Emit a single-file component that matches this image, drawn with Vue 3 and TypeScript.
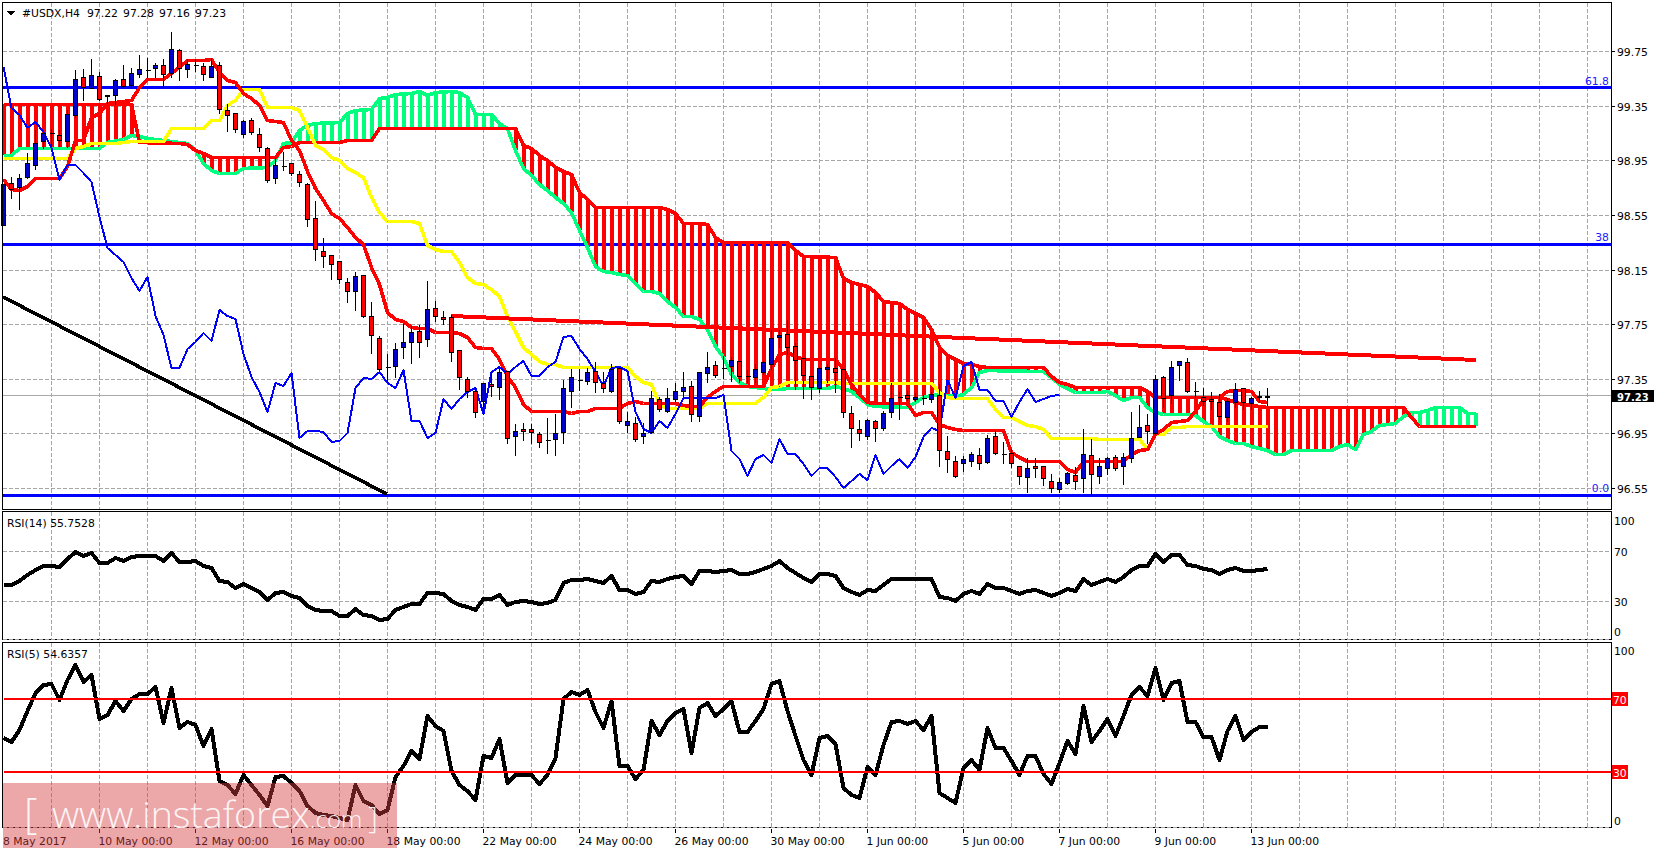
<script setup lang="ts">
type Knot = [number, number]
const barX = (k: number): number => 3.5 + 8 * k
const pts = (ys: number[]): string => ys.map((y, k) => `${barX(k)},${y}`).join(' ')
const knotPts = (ks: Knot[]): string => ks.map(([k, y]) => `${barX(k)},${y}`).join(' ')
const at = (ks: Knot[], k: number): number => {
  for (let i = 1; i < ks.length; i++) {
    if (k <= ks[i][0]) {
      const [k0, y0] = ks[i - 1]
      const [k1, y1] = ks[i]
      return y0 + ((y1 - y0) * (k - k0)) / (k1 - k0)
    }
  }
  return ks[ks.length - 1][1]
}

const spanRed: Knot[] = [[0,104],[16,104],[17,142],[22,143],[23,144],[24,150],[25,153],[26,157],[34,157],[35,147],[36,146],[37,142],[42,142],[43,140],[46,140],[47,128],[64,128],[65,145],[66,148],[67,155],[68,160],[69,167],[70,171],[71,174],[72,192],[73,199],[74,207],[82,207],[83,209],[84,213],[85,223],[87,223],[88,224],[89,237],[90,242],[98,242],[99,250],[100,256],[104,257],[105,278],[106,282],[107,284],[108,286],[109,292],[110,301],[112,303],[113,309],[114,313],[115,317],[116,329],[117,347],[118,355],[119,359],[120,363],[121,364],[122,366],[123,367],[130,367],[131,376],[132,382],[133,384],[134,387],[142,387],[143,391],[144,397],[152,397],[153,399],[154,402],[155,404],[156,405],[157,406],[158,407],[175,407],[176,417],[177,426],[184,426]]
const spanGreen: Knot[] = [[0,155],[1,155],[2,148],[12,148],[13,142],[15,139],[16,135],[17,136],[18,138],[20,140],[23,143],[24,150],[25,163],[26,170],[27,173],[29,173],[30,168],[33,167],[34,160],[35,143],[36,142],[37,130],[38,125],[39,123],[42,122],[43,113],[44,110],[46,109],[47,98],[48,97],[49,94],[51,93],[52,91],[53,95],[54,92],[56,91],[57,92],[58,97],[59,114],[61,114],[62,123],[63,128],[64,150],[65,168],[66,175],[67,184],[68,190],[69,197],[70,203],[71,212],[72,230],[73,247],[74,266],[75,271],[76,272],[77,274],[78,275],[79,283],[80,291],[81,291],[82,293],[83,301],[84,307],[85,316],[86,316],[87,319],[88,329],[89,346],[90,357],[91,374],[92,382],[93,386],[94,387],[96,389],[97,389],[98,388],[103,388],[104,386],[105,388],[106,391],[107,397],[108,404],[109,406],[113,407],[114,402],[115,397],[116,395],[117,394],[118,395],[119,396],[120,394],[121,387],[122,372],[123,370],[129,371],[130,371],[131,377],[132,384],[133,388],[134,392],[137,392],[138,391],[139,395],[140,400],[141,397],[142,397],[143,407],[144,412],[145,414],[148,414],[149,415],[150,421],[151,426],[152,436],[153,440],[154,443],[155,443],[156,446],[157,448],[158,450],[159,454],[160,454],[161,450],[166,450],[167,446],[168,444],[169,449],[170,434],[171,431],[172,425],[173,424],[174,423],[175,416],[176,412],[177,412],[178,410],[179,407],[182,407],[183,413],[184,413]]

const hatches = Array.from({ length: 185 }, (_, k) => {
  const r = at(spanRed, k)
  const g = at(spanGreen, k)
  return { k, x: barX(k), y1: Math.round(Math.min(r, g)), y2: Math.round(Math.max(r, g)), up: g < r }
})

const tenkan = [179,189,190,186,178,178,178,178,166,140,140,117,113,103,102,101,100,87,79,79,79,73,67,60,60,60,59,72,80,82,93,98,105,120,121,122,140,150,171,188,200,213,218,227,237,244,267,284,312,319,321,327,328,328,332,332,332,333,337,347,348,348,359,376,387,404,411,411,411,411,411,413,411,411,408,408,408,408,403,401,403,403,403,403,403,405,406,406,397,391,386,386,386,386,386,386,368,354,352,356,359,359,359,359,359,369,384,394,402,403,403,403,403,403,415,412,412,424,427,429,430,430,430,430,430,430,452,457,461,461,461,461,461,469,472,461,461,461,461,461,461,454,450,449,434,429,422,421,420,411,399,397,397,391,390,390,391,401,402]
const kijun = [158,158,158,158,158,158,158,158,158,148,146,143,143,143,143,142,141,141,141,141,141,128,128,128,128,128,120,120,105,100,89,89,89,107,107,107,107,110,127,145,149,157,160,168,172,177,197,212,221,221,221,221,223,245,249,251,251,262,277,283,284,289,296,316,331,347,354,361,364,364,367,367,367,367,367,367,367,367,367,376,382,384,404,408,408,408,408,408,403,403,403,403,403,403,403,397,387,386,382,382,382,382,382,382,382,383,383,383,383,383,383,383,383,383,383,383,383,392,397,398,398,398,398,398,409,417,417,421,425,426,429,438,438,438,438,438,438,439,439,439,439,439,439,449,434,434,427,427,426,426,426,426,426,426,426,426,426,426,426]
const chikou = [67,108,115,128,122,132,148,180,165,165,173,182,217,248,255,262,278,291,277,316,335,368,368,349,342,333,341,310,316,319,354,377,392,412,383,386,373,438,431,431,432,442,441,433,388,378,379,372,383,388,370,421,421,438,433,399,409,399,392,388,414,372,367,374,367,361,376,376,367,362,337,336,349,359,372,386,368,367,371,412,429,433,421,428,414,398,398,398,398,398,395,451,459,476,459,455,463,439,454,454,464,476,468,468,477,488,481,474,480,455,474,466,459,468,457,437,428,431,380,398,366,362,390,390,401,401,417,402,389,402,399,396,395]
const rsi14 = [585,585,581,575,570,566,566,567,559,552,556,553,563,563,558,561,557,556,556,556,561,553,562,562,561,566,568,581,582,588,584,588,592,600,593,592,596,598,606,610,611,611,616,616,609,615,616,620,619,610,607,604,604,593,593,594,601,605,607,610,599,599,595,605,602,601,602,604,603,600,583,580,580,579,581,583,576,590,590,594,592,581,582,579,577,576,584,571,571,572,571,570,574,574,572,569,566,561,568,573,578,582,574,574,576,588,592,595,590,591,585,579,579,579,579,579,579,597,598,601,594,591,594,584,588,588,591,594,591,590,593,596,593,589,591,579,585,582,579,582,577,570,566,566,554,562,555,555,565,566,569,570,574,570,568,571,571,570,569]
const rsi5 = [738,742,730,711,693,685,684,700,680,665,682,675,719,715,701,711,699,694,694,687,723,688,728,722,725,746,729,781,785,794,775,785,795,806,777,776,783,791,806,813,815,816,818,820,785,801,805,814,810,777,766,751,759,716,726,731,771,785,791,800,756,758,739,783,775,775,775,784,775,758,699,692,695,690,712,728,701,766,766,779,770,721,735,721,713,709,753,708,703,716,709,701,732,732,721,709,684,681,711,736,760,775,738,736,744,788,795,798,767,775,745,722,721,724,721,730,716,793,798,803,768,760,770,728,748,748,761,775,756,756,774,784,763,741,754,706,742,731,719,736,716,695,687,696,668,700,683,681,722,722,737,737,760,731,716,740,732,727,727]

// [color b/r/d, body top, body bottom, wick high, wick low]
const raw: [string, number, number, number, number][] = [
['b',184,225,184,225],['r',183,189,177,198],['b',178,187,174,209],['b',163,177,153,178],['b',143,165,130,169],['b',133,141,132,148],['d',133,133,129,146],['r',135,140,130,146],['b',114,141,110,147],['b',79,115,70,117],
['r',77,87,69,100],['b',75,88,59,88],['r',76,99,72,100],['b',95,96,95,103],['b',80,95,79,104],['r',79,86,65,87],['b',73,85,68,88],['b',69,74,55,77],['d',70,70,58,77],['b',65,68,63,77],
['r',65,74,59,87],['b',49,73,32,77],['r',50,68,49,80],['b',64,69,59,77],['d',65,65,59,71],['r',66,74,63,80],['b',66,77,58,77],['r',65,109,62,113],['r',110,115,104,131],['r',113,129,113,132],
['b',121,134,120,137],['r',120,132,118,134],['r',134,147,128,151],['r',148,180,147,182],['b',165,178,158,183],['d',166,166,152,170],['r',163,173,163,175],['r',174,182,171,186],['r',184,219,183,226],['r',218,249,201,260],
['r',251,256,238,267],['r',255,264,255,279],['r',261,279,261,283],['r',282,291,278,302],['b',276,291,272,310],['r',275,316,275,317],['r',316,335,302,353],['r',338,369,336,370],['d',367,367,354,381],['b',349,366,343,377],
['b',342,347,324,358],['b',332,342,326,363],['r',331,342,325,357],['b',309,339,281,346],['r',308,316,301,321],['r',317,319,311,324],['r',317,352,315,361],['r',350,377,350,389],['r',379,391,377,397],['r',391,412,387,417],
['b',383,401,383,414],['r',384,386,372,396],['b',372,387,367,399],['r',371,438,371,443],['b',431,436,424,455],['r',429,431,423,440],['r',429,432,424,443],['r',434,442,432,447],['d',440,440,418,453],['b',433,439,414,455],
['b',388,432,380,443],['b',377,391,369,407],['d',380,380,369,390],['b',372,381,368,384],['r',371,382,362,392],['r',383,388,372,392],['b',369,391,364,392],['r',368,421,367,423],['b',421,425,412,432],['r',423,439,417,441],
['b',433,436,423,443],['b',398,432,391,433],['r',399,409,397,411],['b',398,411,388,412],['b',391,399,383,401],['b',387,391,372,396],['r',386,414,381,421],['b',372,416,372,421],['b',367,373,352,382],['r',365,375,361,377],
['d',368,368,356,378],['b',360,366,357,381],['r',361,376,361,382],['d',376,376,370,382],['b',369,377,364,382],['b',362,372,361,374],['b',338,364,330,369],['b',335,337,330,347],['r',334,347,320,354],['r',346,360,343,389],
['r',358,375,358,398],['r',376,387,376,399],['b',368,388,367,392],['b',367,369,364,382],['r',368,372,358,392],['r',369,412,369,417],['r',413,428,406,447],['r',429,433,420,440],['b',420,436,419,439],['r',421,428,420,441],
['b',413,428,411,430],['b',398,412,383,417],['d',397,397,392,419],['r',395,398,391,400],['b',397,399,393,401],['d',398,398,395,404],['b',394,399,392,402],['r',395,450,384,466],['r',451,459,436,472],['r',461,476,456,477],
['b',459,463,456,471],['b',454,461,452,466],['r',455,463,448,469],['b',438,462,435,463],['r',436,453,431,454],['d',454,454,442,463],['r',453,463,449,467],['r',466,476,466,484],['b',468,477,458,492],['r',466,468,458,477],
['r',466,478,466,485],['r',481,488,474,492],['b',482,489,478,492],['b',473,483,472,484],['r',475,481,467,489],['b',454,478,429,492],['r',455,474,439,494],['b',466,476,458,483],['b',458,468,457,474],['r',457,468,455,470],
['b',457,466,453,484],['b',438,458,412,462],['b',427,437,405,437],['r',425,431,414,443],['b',379,433,375,434],['r',377,398,376,407],['b',367,395,361,403],['b',361,365,361,380],['r',362,391,358,392],['d',391,391,382,397],
['r',397,401,388,405],['r',399,401,392,409],['r',402,416,394,419],['b',401,417,398,421],['b',389,402,383,407],['r',388,402,388,409],['b',398,403,397,409],['b',396,397,391,402],['b',396,397,388,405]]
const candles = raw.map(([c, top, bot, hi, lo], k) => ({ k, c, top, bot, hi, lo, x: barX(k) }))

const gridX = Array.from({ length: 33 }, (_, j) => 51.5 + 48 * j)
const priceRows = [
  { y: 51.5, t: '99.75' }, { y: 106.5, t: '99.35' }, { y: 160.5, t: '98.95' },
  { y: 215.5, t: '98.55' }, { y: 270.5, t: '98.15' }, { y: 324.5, t: '97.75' },
  { y: 379.5, t: '97.35' }, { y: 433.5, t: '96.95' }, { y: 488.5, t: '96.55' },
]
const blueLines = [
  { y: 87, label: '61.8', ly: 85 },
  { y: 244, label: '38', ly: 241 },
  { y: 495, label: '0.0', ly: 492 },
]
const dates = [
  { x: 3, t: '8 May 2017' }, { x: 98.5, t: '10 May 00:00' }, { x: 194.5, t: '12 May 00:00' },
  { x: 290.5, t: '16 May 00:00' }, { x: 386.5, t: '18 May 00:00' }, { x: 482.5, t: '22 May 00:00' },
  { x: 578.5, t: '24 May 00:00' }, { x: 674.5, t: '26 May 00:00' }, { x: 770.5, t: '30 May 00:00' },
  { x: 866.5, t: '1 Jun 00:00' }, { x: 962.5, t: '5 Jun 00:00' }, { x: 1058.5, t: '7 Jun 00:00' },
  { x: 1154.5, t: '9 Jun 00:00' }, { x: 1250.5, t: '13 Jun 00:00' },
]
</script>

<template>
  <div class="chart">
    <!-- main price pane -->
    <svg class="pane main" viewBox="0 0 1657 510" width="1657" height="510">
      <g class="grid">
        <line v-for="x in gridX" :key="x" :x1="x" :x2="x" y1="3" y2="510" />
        <line v-for="r in priceRows" :key="r.y" x1="3" x2="1611" :y1="r.y" :y2="r.y" />
      </g>
      <line class="last" x1="3" x2="1611" y1="395.5" y2="395.5" />
      <line v-for="b in blueLines" :key="b.y" class="fib" x1="3" x2="1611" :y1="b.y" :y2="b.y" />
      <g>
        <line
          v-for="h in hatches"
          :key="h.k"
          :class="h.up ? 'hatch-g' : 'hatch-r'"
          :x1="h.x"
          :x2="h.x"
          :y1="h.y1"
          :y2="h.y2"
        />
      </g>
      <g transform="translate(0 0.5)">
        <polyline class="ln span-g" :points="knotPts(spanGreen)" />
        <polyline class="ln span-r" :points="knotPts(spanRed)" />
        <polyline class="ln kijun" :points="pts(kijun)" />
        <polyline class="ln tenkan" :points="pts(tenkan)" />
      </g>
      <polyline class="ln chikou" :points="pts(chikou)" />
      <line class="trend-k" x1="3" y1="297" x2="387" y2="494" />
      <line class="trend-r" x1="451" y1="316" x2="1476" y2="360" />
      <g v-for="c in candles" :key="c.k">
        <line class="wick" :x1="c.x" :x2="c.x" :y1="c.hi" :y2="c.lo + 1" />
        <line v-if="c.c === 'd'" class="wick" :x1="c.x - 2" :x2="c.x + 3" :y1="c.top + 0.5" :y2="c.top + 0.5" />
        <rect
          v-else
          :class="c.c === 'b' ? 'up' : 'down'"
          :x="c.x - 2"
          :y="c.top + 0.5"
          width="4"
          :height="Math.max(c.bot - c.top, 1)"
        />
      </g>
      <rect class="frame" x="2.5" y="2.5" width="1608.5" height="507" />
      <g v-for="r in priceRows" :key="'t' + r.y">
        <line class="tick" x1="1611" x2="1615" :y1="r.y" :y2="r.y" />
        <text class="txt" x="1617" :y="r.y + 4.5">{{ r.t }}</text>
      </g>
      <text
        v-for="b in blueLines"
        :key="'l' + b.y"
        class="txt fib-txt"
        x="1609"
        :y="b.ly"
        text-anchor="end"
      >{{ b.label }}</text>
      <path class="tri" d="M6 11H15L10.5 15.5Z" />
      <text class="txt" x="22" y="17">#USDX,H4</text>
      <text class="txt vals" x="87" y="17">97.22 97.28 97.16 97.23</text>
      <rect class="last-box" x="1612" y="390" width="42" height="12" />
      <text class="txt last-txt" x="1617" y="400.5">97.23</text>
    </svg>

    <!-- RSI(14) pane -->
    <svg class="pane" viewBox="0 510 1657 131" width="1657" height="131">
      <g class="grid">
        <line v-for="x in gridX" :key="x" :x1="x" :x2="x" y1="512" y2="640" />
        <line x1="3" x2="1611" y1="551.5" y2="551.5" />
        <line x1="3" x2="1611" y1="601.5" y2="601.5" />
      </g>
      <polyline class="ln rsi" :points="pts(rsi14)" />
      <rect class="frame" x="2.5" y="511.5" width="1608.5" height="128" />
      <line class="grid-over" x1="3" x2="1611" y1="639.5" y2="639.5" />
      <text class="txt" x="7" y="527">RSI(14) 55.7528</text>
      <text class="txt" x="1614" y="525">100</text>
      <text class="txt" x="1614" y="556">70</text>
      <text class="txt" x="1614" y="606">30</text>
      <text class="txt" x="1614" y="636">0</text>
    </svg>

    <!-- RSI(5) pane -->
    <svg class="pane" viewBox="0 641 1657 188" width="1657" height="188">
      <g class="grid">
        <line v-for="x in gridX" :key="x" :x1="x" :x2="x" y1="643" y2="828" />
      </g>
      <polyline class="ln rsi" :points="pts(rsi5)" />
      <line class="lvl" x1="4" x2="1611" y1="699" y2="699" />
      <line class="lvl" x1="4" x2="1611" y1="772" y2="772" />
      <rect class="frame" x="2.5" y="642.5" width="1608.5" height="185" />
      <line class="grid-over" x1="3" x2="1611" y1="827.5" y2="827.5" />
      <text class="txt" x="7" y="658">RSI(5) 54.6357</text>
      <text class="txt" x="1614" y="655">100</text>
      <rect class="lvl-box" x="1612" y="692" width="16" height="14" />
      <rect class="lvl-box" x="1612" y="765" width="16" height="14" />
      <text class="txt lvl-txt" x="1613" y="703.5">70</text>
      <text class="txt lvl-txt" x="1613" y="776.5">30</text>
      <text class="txt" x="1614" y="825">0</text>
    </svg>

    <!-- time axis -->
    <svg class="pane" viewBox="0 829 1657 23" width="1657" height="23">
      <line v-for="d in dates.slice(1)" :key="d.x" class="tick" :x1="d.x + 1" :x2="d.x + 1" y1="829" y2="833" />
      <text v-for="d in dates" :key="'t' + d.x" class="txt" :x="d.x" y="844.5">{{ d.t }}</text>
    </svg>

    <div class="stamp">
      <span class="br">[</span>
      <span class="www">www.instaforex</span><span class="com">.com</span>
      <span class="br close">]</span>
    </div>
  </div>
</template>

<style scoped>
.chart {
  position: relative;
  display: flex;
  flex-direction: column;
  width: 1657px;
  height: 852px;
  overflow: hidden;
  background: #fff;
}
.pane {
  display: block;
  flex: none;
  shape-rendering: crispEdges;
}
.grid line {
  stroke: #a6a6a6;
  stroke-width: 1;
  stroke-dasharray: 4 2;
}
.grid-over {
  stroke: #a6a6a6;
  stroke-width: 1;
  stroke-dasharray: 4 2;
}
.last {
  stroke: #a9a9a9;
  stroke-width: 1;
}
.fib {
  stroke: #0000ff;
  stroke-width: 3;
}
.hatch-r {
  stroke: #ff0000;
  stroke-width: 4;
}
.hatch-g {
  stroke: #00ff7f;
  stroke-width: 4;
}
.ln {
  fill: none;
  stroke-width: 3.6;
  stroke-linejoin: round;
}
.span-r,
.tenkan {
  stroke: #ff0000;
}
.span-g {
  stroke: #00ff7f;
}
.kijun {
  stroke: #ffff00;
}
.chikou {
  stroke: #0000ff;
  stroke-width: 2;
}
.rsi {
  stroke: #000;
  stroke-width: 4;
}
.trend-k {
  stroke: #000;
  stroke-width: 3.6;
}
.trend-r {
  stroke: #ff0000;
  stroke-width: 4;
}
.wick {
  stroke: #000;
  stroke-width: 1;
}
.up {
  fill: #0000cd;
  stroke: #000;
  stroke-width: 1;
}
.down {
  fill: #ff0000;
  stroke: #000;
  stroke-width: 1;
}
.frame {
  fill: none;
  stroke: #000;
  stroke-width: 1;
}
.tick {
  stroke: #000;
  stroke-width: 1;
}
.lvl {
  stroke: #ff0000;
  stroke-width: 2;
}
.lvl-box {
  fill: #ff0000;
}
.last-box {
  fill: #000;
}
.tri {
  fill: #000;
}
.txt {
  font-family: "DejaVu Sans", Verdana, sans-serif;
  font-size: 10.8px;
  fill: #000;
  shape-rendering: auto;
}
.vals {
  word-spacing: 1.7px;
}
.fib-txt {
  fill: #1a1aff;
}
.last-txt {
  fill: #fff;
  font-weight: 700;
  font-size: 10px;
}
.lvl-txt {
  fill: #fff;
}
.stamp {
  position: absolute;
  left: 3px;
  top: 783px;
  width: 394px;
  height: 65px;
  background: rgba(212, 60, 64, 0.45);
  color: rgba(255, 255, 255, 0.9);
  font-family: "Open Sans", "Liberation Sans", sans-serif;
  font-weight: 300;
  line-height: 58px;
  white-space: nowrap;
  display: flex;
  align-items: baseline;
  padding-left: 21px;
  box-sizing: border-box;
}
.br {
  font-size: 42px;
  width: 28px;
}
.close {
  font-size: 30px;
  margin-left: 6px;
  width: auto;
}
.www {
  font-size: 37.5px;
}
.com {
  font-size: 24px;
}
</style>
